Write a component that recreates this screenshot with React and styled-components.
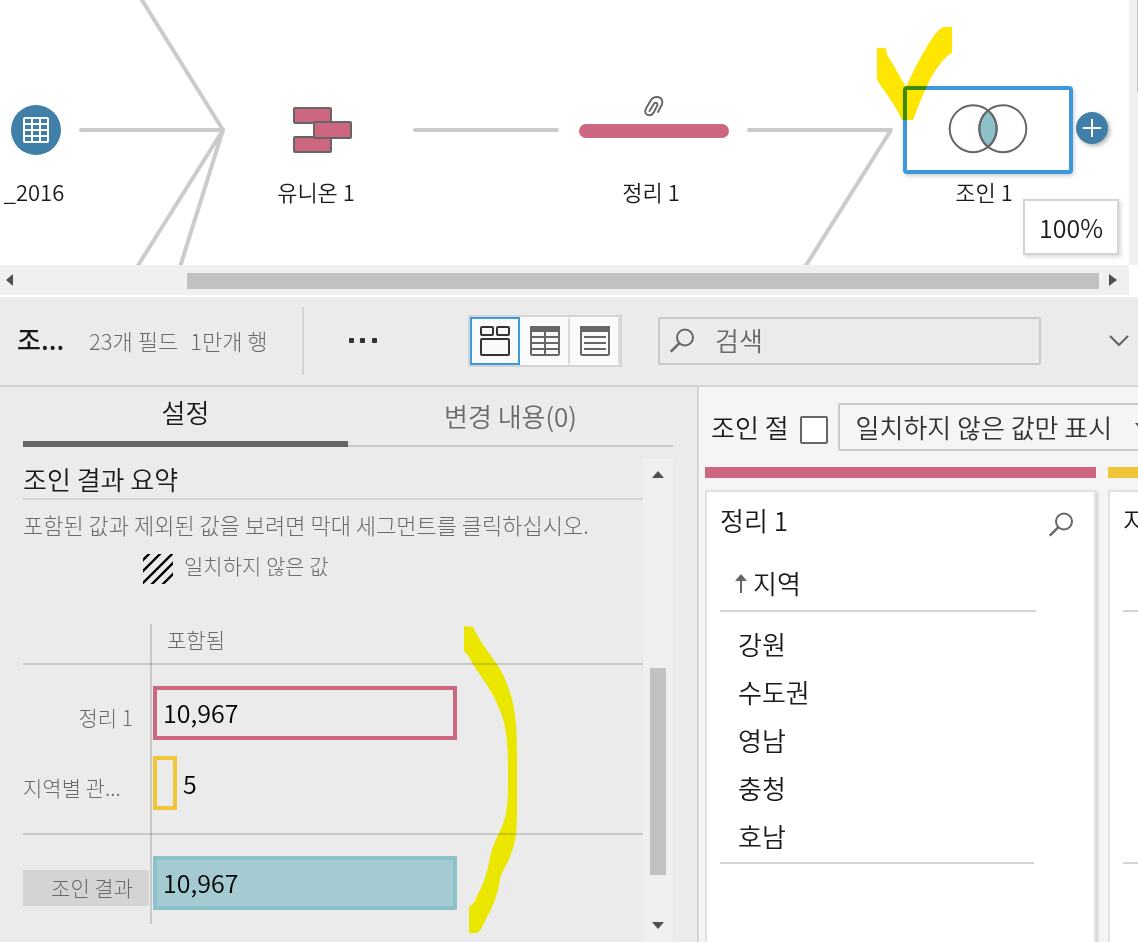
import React from "react";
import styled, { createGlobalStyle } from "styled-components";

const GlobalStyle = createGlobalStyle`
    * {
        box-sizing: border-box;
    }
    body {
        margin: 0;
        background: #fff;
        overflow: hidden;
    }
    body, button, input, select {
        font-family: "Noto Sans CJK KR", "Noto Sans", sans-serif;
        font-weight: 350;
    }
    button {
        padding: 0;
        border: none;
        background: transparent;
        cursor: pointer;
    }
    h2, h3, p, ul {
        margin: 0;
        padding: 0;
        font-size: inherit;
        font-weight: inherit;
    }
`

const Page = styled.div`
    height: 100vh;
    display: flex;
    flex-direction: column;
    color: #1a1a1a;
    font-size: 26px;
    line-height: 36px;
`

/* flow canvas */

const FlowPane = styled.section`
    display: grid;
    grid-template-columns: 1fr 9px;
    grid-template-rows: 265px 30px;
    padding-bottom: 2px;
`

const Canvas = styled.div`
    position: relative;
    overflow: hidden;
`

const Edges = styled.svg`
    position: absolute;
    top: 0;
    left: 0;
`

const Node = styled.button`
    position: absolute;
    left: ${props => props.$x}px;
    top: ${props => props.$y}px;
    width: ${props => props.$w}px;
    height: ${props => props.$h}px;
    display: flex;
    justify-content: center;
    align-items: center;
`

const TableNode = styled(Node)`
    border-radius: 50%;
    background: #3f7fa8;
`

const CleanNode = styled(Node)`
    border-radius: 7px;
    background: #cd667f;
`

const JoinNode = styled(Node)`
    border: 4px solid #3c99dc;
    border-radius: 4px;
    background: #fff;
    box-shadow: 1px 2px 4px rgba(0, 0, 0, 0.2);
`

const AddButton = styled(Node)`
    border-radius: 50%;
    background: #3f7fa8;
    box-shadow: 2px 2px 4px rgba(0, 0, 0, 0.3);
`

const NodeLabel = styled.span`
    position: absolute;
    left: ${props => props.$x}px;
    top: 175px;
    width: 150px;
    font-size: 22px;
    line-height: 32px;
    text-align: center;
    white-space: nowrap;
`

const ZoomBox = styled.div`
    position: absolute;
    right: 10px;
    bottom: 10px;
    width: 96px;
    height: 56px;
    border: 2px solid #d4d4d4;
    background: #fff;
    box-shadow: 2px 2px 4px rgba(0, 0, 0, 0.15);
    font-size: 25px;
    line-height: 52px;
    text-align: center;
`

const Marker = styled.svg`
    position: absolute;
    left: ${props => props.$x}px;
    top: ${props => props.$y}px;
    mix-blend-mode: multiply;
    pointer-events: none;
`

const SideTrack = styled.div`
    display: flex;
    justify-content: flex-end;
    background: #f0f0f0;
    span {
        width: 1px;
        height: 92px;
        background: #c1c1c1;
    }
`

const BottomTrack = styled.div`
    display: flex;
    align-items: center;
    padding: 0 12px 0 6px;
    background: #f0f0f0;
    .thumb {
        flex: 1;
        height: 16px;
        margin: 2px 10px 0 173px;
        background: #c1c1c1;
    }
`

/* toolbar */

const Toolbar = styled.header`
    height: 90px;
    display: flex;
    align-items: center;
    padding-right: 9px;
    border-bottom: 2px solid #d4d4d4;
    background: #ebebeb;
    h2 {
        width: 89px;
        padding: 0 0 4px 17px;
        font-weight: 500;
    }
`

const Counts = styled.p`
    width: 215px;
    height: 68px;
    display: flex;
    gap: 12px;
    border-right: 2px solid #d4d4d4;
    color: #6b6b6b;
    font-size: 22px;
    font-weight: 300;
    line-height: 66px;
    white-space: nowrap;
`

const MoreButton = styled.button`
    width: 30px;
    height: 30px;
    margin: 0 90px 2px 44px;
    display: flex;
    justify-content: center;
    align-items: center;
`

const ViewSwitch = styled.div`
    display: flex;
    border: 2px solid #d4d4d4;
    background: #fafafa;
`

const ViewButton = styled.button`
    width: 50px;
    height: 48px;
    display: flex;
    justify-content: center;
    align-items: center;
    border: 2px solid ${props => props.$active ? '#3c99dc' : 'transparent'};
    border-right-color: ${props => props.$active ? '#3c99dc' : '#d9d9d9'};
`

const SearchBox = styled.label`
    flex: 1;
    height: 48px;
    margin: 0 68px 0 36px;
    padding-left: 9px;
    display: flex;
    align-items: center;
    gap: 20px;
    border: 2px solid #c9c9c9;
    border-radius: 2px;
    input {
        flex: 1;
        min-width: 0;
        height: 40px;
        padding: 0 0 4px;
        border: none;
        outline: none;
        background: transparent;
        font-size: 26px;
        &::placeholder {
            color: #6b6b6b;
            opacity: 1;
        }
    }
`

/* settings */

const Body = styled.main`
    flex: 1;
    min-height: 0;
    display: flex;
`

const Settings = styled.section`
    flex: 0 1 699px;
    min-width: 0;
    display: flex;
    flex-direction: column;
    padding: 0 24px 0 23px;
    border-right: 2px solid #d4d4d4;
    background: #ebebeb;
`

const Tabs = styled.div`
    height: 60px;
    display: flex;
    flex-shrink: 0;
    margin-bottom: 12px;
    box-shadow: inset 0 -2px #c9c9c9;
`

const Tab = styled.button`
    flex: 1;
    padding-bottom: ${props => props.$active ? 4 : 2}px;
    border-bottom: ${props => props.$active ? '6px solid #666' : 'none'};
    color: ${props => props.$active ? '#1a1a1a' : '#6b6b6b'};
    font-size: 26px;
    line-height: 36px;
`

const Scroller = styled.div`
    flex: 1;
    min-height: 0;
    display: flex;
    overflow: hidden;
`

const Summary = styled.div`
    flex: 1;
    min-width: 0;
    position: relative;
    color: #6b6b6b;
    font-size: 21px;
    font-weight: 300;
    h3 {
        height: 41px;
        border-bottom: 2px solid #d4d4d4;
        color: #1a1a1a;
        font-size: 26px;
        font-weight: 350;
        line-height: 40px;
    }
    p {
        height: 50px;
        font-size: 22px;
        line-height: 48px;
        white-space: nowrap;
    }
`

const Legend = styled.div`
    display: flex;
    gap: 11px;
    margin: 4px 0 40px 120px;
    line-height: 22px;
`

const Chart = styled.div`
    background: linear-gradient(rgba(0, 0, 0, 0.15), rgba(0, 0, 0, 0.15)) 127px 0 / 2px 100% no-repeat;
`

const ChartHead = styled.div`
    height: 41px;
    padding-left: 144px;
    border-bottom: 2px solid rgba(0, 0, 0, 0.15);
    line-height: 30px;
`

const ChartGroup = styled.div`
    display: flex;
    flex-direction: column;
    gap: 16px;
    padding: 21px 0 ${props => props.$last ? 14 : 23}px;
    border-bottom: ${props => props.$last ? 'none' : '2px solid rgba(0, 0, 0, 0.15)'};
`

const ChartRow = styled.div`
    display: grid;
    grid-template-columns: 126px 1fr;
    gap: 4px;
    align-items: end;
`

const RowLabel = styled.span`
    height: 36px;
    margin-bottom: 4px;
    padding-right: 16px;
    background: ${props => props.$selected ? '#d4d4d4' : 'transparent'};
    line-height: 34px;
    text-align: ${props => props.$cut ? 'left' : 'right'};
    white-space: nowrap;
`

const BarLine = styled.div`
    display: flex;
    align-items: center;
    gap: 6px;
    color: #000;
    font-size: 25px;
    font-weight: 350;
`

const Bar = styled.button`
    height: 54px;
    padding: 0 0 2px 6px;
    border: 4px solid ${props => props.$color};
    background: ${props => props.$fill || 'transparent'};
    font-size: 25px;
    text-align: left;
`

const Scrollbar = styled.div`
    width: 30px;
    display: flex;
    flex-direction: column;
    align-items: center;
    padding: 12px 0;
    background: #f0f0f0;
    .thumb {
        width: 16px;
        height: 207px;
        margin: auto 0 47px;
        background: #c1c1c1;
    }
`

/* join clauses */

const Clauses = styled.section`
    flex: 1 0 0;
    min-width: 0;
    display: flex;
    flex-direction: column;
    padding: 16px 0 0 6px;
    overflow: hidden;
    background: #f5f5f5;
`

const ClauseBar = styled.div`
    height: 48px;
    display: flex;
    flex-shrink: 0;
    align-items: center;
    padding-left: 6px;
    white-space: nowrap;
    input {
        appearance: none;
        width: 28px;
        height: 28px;
        flex-shrink: 0;
        margin: 6px 10px 0 11px;
        border: 2px solid #666;
        border-radius: 2px;
        background: #fff;
    }
`

const SelectWrap = styled.div`
    position: relative;
    flex: 0 0 320px;
    select {
        appearance: none;
        width: 100%;
        height: 48px;
        padding: 0 16px 2px;
        border: 2px solid #c9c9c9;
        border-radius: 2px;
        background: transparent;
        color: #333;
        font-size: 26px;
    }
    svg {
        position: absolute;
        top: 20px;
        left: 297px;
    }
`

const Columns = styled.div`
    flex: 1;
    display: flex;
    gap: 12px;
    margin-top: 16px;
`

const Column = styled.article`
    flex: 0 0 391px;
    display: flex;
    flex-direction: column;
    gap: 12px;
    &::before {
        content: "";
        height: 11px;
        background: ${props => props.$color};
    }
`

const Card = styled.div`
    flex: 1;
    padding: 10px 13px;
    border: 2px solid #e2e2e2;
    border-bottom: none;
    background: #fff;
    box-shadow: 2px 2px 3px rgba(0, 0, 0, 0.15);
`

const CardHead = styled.div`
    display: flex;
    justify-content: space-between;
    align-items: flex-end;
    padding-right: 7px;
    white-space: nowrap;
    button {
        height: 26px;
    }
    svg {
        display: block;
    }
`

const FieldHead = styled.div`
    height: 74px;
    display: flex;
    align-items: center;
    gap: 6px;
    margin-right: 45px;
    padding: 18px 0 0 15px;
    border-bottom: 2px solid #d4d4d4;
`

const Values = styled.ul`
    margin-right: 47px;
    padding: 8px 0 2px 18px;
    border-bottom: 2px solid #d4d4d4;
    list-style: none;
    li {
        line-height: 48px;
    }
`

function Arrow({ dir }) {
    const shapes = {
        left: '7,0 7,12 0,6',
        right: '0,0 0,12 8,6',
        up: '0,7 12,7 6,0',
        down: '0,0 12,0 6,7',
    }
    const side = dir === 'left' || dir === 'right'
    return (
        <svg width={side ? 8 : 12} height={side ? 12 : 8}>
            <polygon points={shapes[dir]} fill="#505050" />
        </svg>
    )
}

function Magnifier() {
    return (
        <svg width="26" height="26" fill="none" stroke="#666" strokeWidth="2">
            <circle cx="16" cy="9.500" r="8" />
            <path d="M10.200 15.300L1.800 23.700" strokeWidth="2.400" />
        </svg>
    )
}

function Flow() {
    return (
        <FlowPane>
            <Canvas>
                <Edges width="1129" height="265" fill="none" stroke="#cbcbcb" strokeWidth="4" strokeLinecap="round" strokeLinejoin="round">
                    <path d="M140 -3L223 130H81" />
                    <path d="M137 267L223 130L180 267" />
                    <path d="M415 130H557" />
                    <path d="M749 130H891L805 267" />
                </Edges>

                <TableNode $x={11} $y={105} $w={50} $h={50} aria-label="_2016">
                    <svg width="26" height="26" fill="none" stroke="#fff" strokeWidth="2">
                        <rect x="1" y="1" width="24" height="24" rx="1" />
                        <path d="M1 7H25M1 13H25M1 19H25M9 1V25M17 1V25" />
                    </svg>
                </TableNode>
                <NodeLabel $x={-41}>_2016</NodeLabel>

                <Node $x={293} $y={107} $w={59} $h={46} aria-label="유니온 1">
                    <svg width="59" height="46" fill="#cd667f" stroke="#666" strokeWidth="2">
                        <rect x="1" y="1" width="37" height="15" rx="1" />
                        <rect x="1" y="30" width="37" height="15" rx="1" />
                        <rect x="21" y="15" width="37" height="16" rx="1" />
                    </svg>
                </Node>
                <NodeLabel $x={241}>유니온 1</NodeLabel>

                <Node $x={643} $y={94} $w={22} $h={24} aria-label="첨부">
                    <svg width="22" height="24" fill="none" stroke="#666" strokeWidth="1.900" strokeLinecap="round">
                        <path d="M15 18L18.800 10.800C20.500 7 18.500 3 14 3C11 3 9 4.200 7.700 6.500L3 14.500C0.800 18.500 3 21.300 6.300 21.300C8.500 21.300 9.800 20 10.800 18.200L14.300 11.500C15.300 8.800 12 7.800 10.800 10L6.500 17" />
                    </svg>
                </Node>
                <CleanNode $x={579} $y={124} $w={150} $h={14} aria-label="정리 1" />
                <NodeLabel $x={576}>정리 1</NodeLabel>

                <JoinNode $x={903} $y={86} $w={170} $h={88} aria-label="조인 1">
                    <svg width="80" height="52" fill="none" stroke="#666" strokeWidth="2">
                        <path d="M40 6.500A23.500 23.500 0 0 1 40 42.900A23.500 23.500 0 0 1 40 6.500Z" fill="#8bc1c9" />
                        <circle cx="25.200" cy="24.700" r="23.500" />
                        <circle cx="54.800" cy="24.700" r="23.500" />
                    </svg>
                </JoinNode>
                <NodeLabel $x={909}>조인 1</NodeLabel>
                <AddButton $x={1076} $y={112} $w={32} $h={32} aria-label="추가">
                    <svg width="18" height="18" stroke="#fff" strokeWidth="2">
                        <path d="M0 9H18M9 0V18" />
                    </svg>
                </AddButton>

                <ZoomBox>100%</ZoomBox>
                <Marker $x={877} $y={27} width="76" height="94">
                    <path d="M0 21H9C9 26 11 30 14 34L29 60C34 49 40 36 48 23C56 9 60 4 66 0H75V26C68 29 57 43 50 59C45 69 40 83 36 93H25C20 82 12 70 4 59Q0 54 0 50Z" fill="#ffe600" />
                </Marker>
            </Canvas>
            <SideTrack><span /></SideTrack>
            <BottomTrack>
                <Arrow dir="left" />
                <div className="thumb" />
                <Arrow dir="right" />
            </BottomTrack>
        </FlowPane>
    )
}

function Tools() {
    return (
        <Toolbar>
            <h2>조...</h2>
            <Counts><span>23개 필드</span><span>1만개 행</span></Counts>
            <MoreButton aria-label="더 보기">
                <svg width="30" height="6" fill="#333">
                    <rect x="1" y="1" width="5" height="5" rx="1" />
                    <rect x="12" y="1" width="5" height="5" rx="1" />
                    <rect x="24" y="1" width="5" height="5" rx="1" />
                </svg>
            </MoreButton>
            <ViewSwitch>
                <ViewButton $active aria-label="프로필">
                    <svg width="30" height="30" fill="none" stroke="#333" strokeWidth="2">
                        <rect x="1" y="1" width="12" height="8" rx="1" />
                        <rect x="17" y="1" width="12" height="8" rx="1" />
                        <rect x="1" y="13" width="28" height="16" rx="1" />
                    </svg>
                </ViewButton>
                <ViewButton aria-label="표">
                    <svg width="30" height="30" fill="none" stroke="#666" strokeWidth="2">
                        <rect x="1" y="1" width="28" height="28" rx="1" />
                        <rect x="1" y="1" width="28" height="4" fill="#666" />
                        <path d="M1 11H29M1 17H29M1 23H29M15 5V29" />
                    </svg>
                </ViewButton>
                <ViewButton aria-label="목록">
                    <svg width="30" height="30" fill="none" stroke="#666" strokeWidth="2">
                        <rect x="1" y="1" width="28" height="28" rx="1" />
                        <rect x="1" y="1" width="28" height="4" fill="#666" />
                        <path d="M4 11H26M4 17H26M4 23H26" />
                    </svg>
                </ViewButton>
            </ViewSwitch>
            <SearchBox>
                <Magnifier />
                <input type="search" placeholder="검색" aria-label="검색" />
            </SearchBox>
            <button aria-label="접기">
                <svg width="20" height="12" fill="none" stroke="#666" strokeWidth="2.200">
                    <path d="M1 1L10 10L19 1" />
                </svg>
            </button>
        </Toolbar>
    )
}

export default function App() {
    return (
        <>
            <GlobalStyle />
            <Page>
                <Flow />
                <Tools />
                <Body>
                    <Settings>
                        <Tabs>
                            <Tab $active>설정</Tab>
                            <Tab>변경 내용(0)</Tab>
                        </Tabs>
                        <Scroller>
                            <Summary>
                                <h3>조인 결과 요약</h3>
                                <p>포함된 값과 제외된 값을 보려면 막대 세그먼트를 클릭하십시오.</p>
                                <Legend>
                                    <svg width="30" height="30" stroke="#000" strokeWidth="2.300">
                                        <path d="M-2 8L8 -2M-2 19L19 -2M-2 31L31 -2M8 31L31 8M19 31L31 19" />
                                    </svg>
                                    일치하지 않은 값
                                </Legend>
                                <Chart>
                                    <ChartHead>포함됨</ChartHead>
                                    <ChartGroup>
                                        <ChartRow>
                                            <RowLabel>정리 1</RowLabel>
                                            <BarLine><Bar $color="#cd667f" style={{ width: 304 }}>10,967</Bar></BarLine>
                                        </ChartRow>
                                        <ChartRow>
                                            <RowLabel $cut>지역별 관...</RowLabel>
                                            <BarLine><Bar $color="#f0c537" style={{ width: 24 }} aria-label="5" />5</BarLine>
                                        </ChartRow>
                                    </ChartGroup>
                                    <ChartGroup $last>
                                        <ChartRow>
                                            <RowLabel $selected>조인 결과</RowLabel>
                                            <BarLine><Bar $color="#8bc1c9" $fill="#a3cbd1" style={{ width: 304 }}>10,967</Bar></BarLine>
                                        </ChartRow>
                                    </ChartGroup>
                                </Chart>
                                <Marker $x={441} $y={167} width="54" height="308">
                                    <path d="M0 0L9 1C13 9 16 14 20 20L32 37C40 48 44 60 48 73C52 90 53 105 53 130V190C53 207 51 217 47 228C44 238 38 244 36 253C33 272 28 282 24 289L17 303Q15 306 12 307H5V281Q11 277 13 270C20 257 22 250 25 237C27 223 32 213 36 205C42 193 44 180 44 160V140C44 110 41 95 34 80C28 64 15 48 8 37Q4 28 0 25Z" fill="#fffa00" />
                                </Marker>
                            </Summary>
                            <Scrollbar>
                                <Arrow dir="up" />
                                <div className="thumb" />
                                <Arrow dir="down" />
                            </Scrollbar>
                        </Scroller>
                    </Settings>
                    <Clauses>
                        <ClauseBar>
                            <label htmlFor="mismatch">조인 절</label>
                            <input id="mismatch" type="checkbox" />
                            <SelectWrap>
                                <select aria-label="표시할 값">
                                    <option>일치하지 않은 값만 표시</option>
                                </select>
                                <svg width="12" height="8"><polygon points="0,0 12,0 6,7" fill="#505050" /></svg>
                            </SelectWrap>
                        </ClauseBar>
                        <Columns>
                            <Column $color="#cd667f">
                                <Card>
                                    <CardHead>
                                        <span>정리 1</span>
                                        <button aria-label="찾기"><Magnifier /></button>
                                    </CardHead>
                                    <FieldHead>
                                        <svg width="12" height="24" fill="#666">
                                            <path d="M6 3L12 10H7V22H5V10H0Z" />
                                        </svg>
                                        지역
                                    </FieldHead>
                                    <Values>
                                        <li>강원</li>
                                        <li>수도권</li>
                                        <li>영남</li>
                                        <li>충청</li>
                                        <li>호남</li>
                                    </Values>
                                </Card>
                            </Column>
                            <Column $color="#f0c537">
                                <Card>
                                    <CardHead>지역별 관...</CardHead>
                                    <FieldHead />
                                    <Values>
                                        <li>&nbsp;</li>
                                        <li>&nbsp;</li>
                                        <li>&nbsp;</li>
                                        <li>&nbsp;</li>
                                        <li>&nbsp;</li>
                                    </Values>
                                </Card>
                            </Column>
                        </Columns>
                    </Clauses>
                </Body>
            </Page>
        </>
    )
}
